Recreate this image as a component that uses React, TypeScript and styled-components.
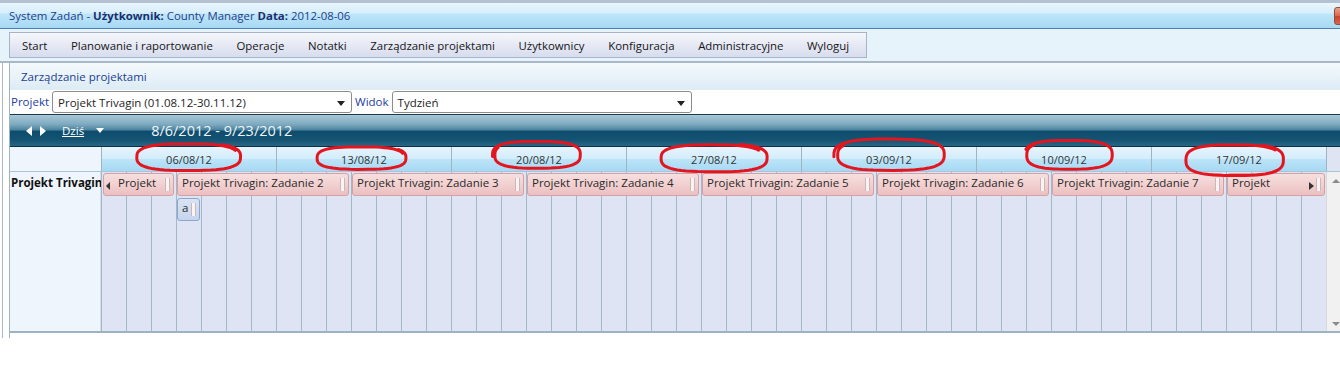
import React from 'react';
import styled, { createGlobalStyle } from 'styled-components';

const GlobalStyle = createGlobalStyle`
	html, body {
		margin: 0;
		padding: 0;
		background: #ffffff;
		overflow: hidden;
	}
	body {
		font-family: 'Open Sans', 'Noto Sans', 'Liberation Sans', sans-serif;
		font-size: 11px;
		color: #222;
	}
`;

const Page = styled.div`
	position: relative;
	width: 1340px;
	height: 392px;
	overflow: hidden;
	background: #fff;
`;

const TopStrip = styled.div`
	height: 3px;
	background: #b3c1d1;
`;

const TitleBar = styled.div`
	display: flex;
	align-items: center;
	height: 25px;
	padding-left: 9px;
	border-bottom: 1px solid #4b82b3;
	background: linear-gradient(to bottom, #eaf6fd 0%, #d6eefb 40%, #bde5f9 45%, #a7d9f4 100%);
	color: #1f3d8b;
	font-size: 11.4px;
	white-space: nowrap;
	b {
		color: #1a2f70;
		font-weight: 700;
	}
`;

const CloseButton = styled.div`
	margin-left: auto;
	margin-right: -18px;
	width: 22px;
	height: 16px;
	border: 1px solid #8e4d3c;
	border-radius: 3px;
	background: linear-gradient(to bottom, #eea08e 0%, #d9634c 50%, #c4432b 51%, #d8664b 100%);
`;

const MenuArea = styled.div`
	height: 32px;
	padding: 3px 0 0 9px;
	box-sizing: border-box;
	background: #e7f3fb;
`;

const Menu = styled.div`
	display: inline-flex;
	align-items: center;
	height: 24px;
	padding-right: 5px;
	border: 1px solid #a7b4c7;
	background: linear-gradient(to bottom, #f6f7fb 0%, #e6e9f4 50%, #d7ddee 100%);
`;

const MenuItem = styled.span`
	padding: 0 11.8px;
	color: #161616;
	font-size: 11.4px;
	white-space: nowrap;
	&:first-child {
		padding-left: 12px;
	}
`;

const Divider = styled.div`
	height: 2px;
	background: #a9b8c8;
`;

const Frame = styled.div`
	display: flex;
	height: 275px;
	margin-left: 2px;
	border-left: 1px solid #a9b8c8;
	padding-left: 6px;
`;

const Panel = styled.div`
	flex: 1;
	display: flex;
	flex-direction: column;
	border-left: 1px solid #9fb3c3;
	min-width: 0;
`;

const SectionHeader = styled.div`
	height: 27px;
	line-height: 27px;
	padding-left: 11px;
	background: linear-gradient(to bottom, #f4f9fc 0%, #eaf3f9 45%, #dcebf5 100%);
	color: #1c3e94;
	font-size: 11.5px;
`;

const FilterRow = styled.div`
	display: flex;
	align-items: center;
	height: 24px;
	background: #fff;
`;

const FilterLabel = styled.span<{ $gap: number }>`
	margin-left: ${(p) => p.$gap}px;
	margin-right: 3px;
	margin-bottom: 2px;
	color: #2140a3;
	font-size: 11.5px;
`;

const Select = styled.div`
	position: relative;
	display: flex;
	align-items: center;
	box-sizing: border-box;
	width: 300px;
	height: 22px;
	padding-left: 5px;
	border: 1px solid #8c8c8c;
	border-radius: 3px;
	background: #fff;
	color: #1e1e1e;
	font-size: 11.5px;
`;

const SelectCaret = styled.span`
	position: absolute;
	right: 6px;
	top: 9px;
	width: 0;
	height: 0;
	border-left: 4px solid transparent;
	border-right: 4px solid transparent;
	border-top: 5px solid #222;
`;

const Toolbar = styled.div`
	display: flex;
	align-items: center;
	height: 31px;
	padding-left: 16px;
	border-top: 1px solid #1f3a4a;
	border-bottom: 1px solid #0b3144;
	background: linear-gradient(
		to bottom,
		#a9c7d6 0%,
		#7eaac0 30%,
		#4f86a1 47%,
		#0f4d6d 53%,
		#145373 80%,
		#296686 100%
	);
	color: #fff;
`;

const Arrow = styled.span<{ $dir: 'left' | 'right' | 'down'; $color?: string }>`
	display: inline-block;
	width: 0;
	height: 0;
	${(p) =>
		p.$dir === 'left'
			? `border-top: 5px solid transparent; border-bottom: 5px solid transparent; border-right: 6px solid ${p.$color || '#fff'};`
			: p.$dir === 'right'
			? `border-top: 5px solid transparent; border-bottom: 5px solid transparent; border-left: 6px solid ${p.$color || '#fff'};`
			: `border-left: 4px solid transparent; border-right: 4px solid transparent; border-top: 5px solid ${p.$color || '#fff'};`}
`;

const NavArrows = styled.div`
	display: flex;
	gap: 8px;
	align-items: center;
`;

const TodayLink = styled.span`
	margin-left: 16px;
	margin-right: 12px;
	color: #fff;
	font-size: 11.5px;
	text-decoration: underline;
`;

const RangeText = styled.span`
	margin-left: 47px;
	color: #eef4f8;
	font-size: 14.5px;
`;

const Scheduler = styled.div`
	display: flex;
	flex-direction: column;
`;

const HeaderRow = styled.div`
	display: grid;
	grid-template-columns: 91px repeat(7, 175px) 1fr;
	height: 24px;
	border-bottom: 1px solid #a8c4d6;
`;

const Corner = styled.div`
	background: #eef5fc;
`;

const DateCell = styled.div`
	display: flex;
	align-items: center;
	justify-content: center;
	border-left: 1px solid #9fb3c2;
	background: linear-gradient(to bottom, #e6f4fd 0%, #d3edfb 48%, #bce4f8 52%, #a6d9f4 100%);
	color: #333;
	font-size: 11px;
`;

const HeaderCap = styled.div`
	border-left: 1px solid #a0b4c4;
	background: #dee4f2;
`;

const BodyRow = styled.div`
	display: grid;
	grid-template-columns: 91px 1225px 1fr;
	height: 159px;
	border-bottom: 2px solid #9db2c2;
`;

const RowLabel = styled.div`
	padding: 3px 0 0 1px;
	border-right: 1px solid #d3deea;
	background: #eef5fd;
	color: #111;
	font-size: 11.5px;
	font-weight: 700;
	white-space: nowrap;
`;

const Grid = styled.div`
	display: grid;
	grid-template-columns: 74px repeat(6, 175px) 101px;
	grid-auto-rows: 25px;
	align-content: start;
	background-color: #dfe4f4;
	background-image: repeating-linear-gradient(
		to right,
		transparent 0px,
		transparent 24px,
		#a3b8c6 24px,
		#a3b8c6 25px
	);
	background-position: 1px 0;
`;

const Slot = styled.div<{ $col: number; $row: number }>`
	grid-column: ${(p) => p.$col};
	grid-row: ${(p) => p.$row};
	padding: 1px 1px 1px 2px;
	min-width: 0;
`;

const EventBox = styled.div<{ $tone: 'red' | 'blue'; $padLeft: number; $padRight: number }>`
	position: relative;
	box-sizing: border-box;
	height: 23px;
	padding: 1px ${(p) => p.$padRight}px 0 ${(p) => p.$padLeft}px;
	border: 1px solid ${(p) => (p.$tone === 'red' ? '#d5a0a3' : '#8ea5c9')};
	border-radius: 3px;
	overflow: hidden;
	background: ${(p) =>
		p.$tone === 'red'
			? 'linear-gradient(to bottom, #f7dfdf 0%, #f2d0d0 50%, #ebc0c1 100%)'
			: 'linear-gradient(to bottom, #d8e3f5 0%, #c6d5ee 100%)'};
	color: #2a2a2a;
	font-size: 11.5px;
	line-height: 16px;
	&::after {
		content: '';
		position: absolute;
		right: 3px;
		top: 4px;
		bottom: 4px;
		width: 3px;
		border-left: 1px solid #c8b8b8;
		border-right: 1px solid #c8b8b8;
		background: #fbf3f3;
	}
`;

const EventArrow = styled.span<{ $side: 'left' | 'right' }>`
	position: absolute;
	top: 8px;
	${(p) => (p.$side === 'left' ? 'left: 2px;' : 'right: 10px;')}
	width: 0;
	height: 0;
	border-top: 4px solid transparent;
	border-bottom: 4px solid transparent;
	${(p) => (p.$side === 'left' ? 'border-right: 4px solid #333;' : 'border-left: 5px solid #333;')}
`;

const Scrollbar = styled.div`
	display: flex;
	flex-direction: column;
	justify-content: space-between;
	align-items: center;
	padding: 7px 0 5px 4px;
	border-left: 1px solid #d9d9d9;
	background: #f1f1f1;
`;

const ScrollArrow = styled.span<{ $up?: boolean }>`
	width: 0;
	height: 0;
	border-left: 4px solid transparent;
	border-right: 4px solid transparent;
	${(p) => (p.$up ? 'border-bottom: 4px solid #8a8a8a;' : 'border-top: 4px solid #8a8a8a;')}
`;

const Annotations = styled.svg`
	position: absolute;
	left: 0;
	top: 0;
	pointer-events: none;
`;

const menuItems = [
	'Start',
	'Planowanie i raportowanie',
	'Operacje',
	'Notatki',
	'Zarządzanie projektami',
	'Użytkownicy',
	'Konfiguracja',
	'Administracyjne',
	'Wyloguj',
];

const dates = ['06/08/12', '13/08/12', '20/08/12', '27/08/12', '03/09/12', '10/09/12', '17/09/12'];

interface IEvent {
	col: number;
	row: number;
	text: string;
	tone: 'red' | 'blue';
	arrow?: 'left' | 'right';
}

const events: IEvent[] = [
	{ col: 1, row: 1, text: 'Projekt Trivagin: Zadanie 1', tone: 'red', arrow: 'left' },
	{ col: 2, row: 1, text: 'Projekt Trivagin: Zadanie 2', tone: 'red' },
	{ col: 3, row: 1, text: 'Projekt Trivagin: Zadanie 3', tone: 'red' },
	{ col: 4, row: 1, text: 'Projekt Trivagin: Zadanie 4', tone: 'red' },
	{ col: 5, row: 1, text: 'Projekt Trivagin: Zadanie 5', tone: 'red' },
	{ col: 6, row: 1, text: 'Projekt Trivagin: Zadanie 6', tone: 'red' },
	{ col: 7, row: 1, text: 'Projekt Trivagin: Zadanie 7', tone: 'red' },
	{ col: 8, row: 1, text: 'Projekt Trivagin: Zadanie 8', tone: 'red', arrow: 'right' },
];

// hand drawn red loops around the week dates
interface ILoop {
	cx: number;
	cy: number;
	rx: number;
	ry: number;
	start: number;
	over: number;
	drift: number;
}

const loops: ILoop[] = [
	{ cx: 188, cy: 157, rx: 50, ry: 13, start: -0.4, over: 0.6, drift: 0.06 },
	{ cx: 361, cy: 158, rx: 43, ry: 11, start: -0.3, over: 0.4, drift: 0.05 },
	{ cx: 537, cy: 155, rx: 42, ry: 13, start: 3.6, over: 0.5, drift: 0.06 },
	{ cx: 713, cy: 158, rx: 50, ry: 13, start: -0.5, over: 0.7, drift: 0.1 },
	{ cx: 890, cy: 155, rx: 52, ry: 15, start: 3.7, over: 0.6, drift: 0.08 },
	{ cx: 1069, cy: 155, rx: 42, ry: 14, start: 3.8, over: 0.4, drift: 0.05 },
	{ cx: 1234, cy: 160, rx: 47, ry: 15, start: -0.6, over: 0.5, drift: 0.06 },
];

const loopPath = (l: ILoop) => {
	const steps = 64;
	const sweep = Math.PI * 2 + l.over;
	const parts: string[] = [];
	for (let i = 0; i <= steps; i++) {
		const t = l.start - (sweep * i) / steps;
		const k = 1 + l.drift * (i / steps);
		const c = Math.cos(t);
		const s = Math.sin(t);
		const x = l.cx + l.rx * k * Math.sign(c) * Math.pow(Math.abs(c), 0.7);
		const y = l.cy + l.ry * k * Math.sign(s) * Math.pow(Math.abs(s), 0.7);
		parts.push(`${i ? 'L' : 'M'}${x.toFixed(1)} ${y.toFixed(1)}`);
	}
	return parts.join(' ');
};

function App() {
	return (
		<>
			<GlobalStyle />
			<Page>
				<TopStrip />
				<TitleBar>
					System Zadań -&nbsp;<b>Użytkownik:</b>&nbsp;County Manager&nbsp;<b>Data:</b>&nbsp;2012-08-06
					<CloseButton />
				</TitleBar>
				<MenuArea>
					<Menu>
						{menuItems.map((item) => (
							<MenuItem key={item}>{item}</MenuItem>
						))}
					</Menu>
				</MenuArea>
				<Divider />
				<Frame>
					<Panel>
						<SectionHeader>Zarządzanie projektami</SectionHeader>
						<FilterRow>
							<FilterLabel $gap={1}>Projekt</FilterLabel>
							<Select>
								Projekt Trivagin (01.08.12-30.11.12)
								<SelectCaret />
							</Select>
							<FilterLabel $gap={3}>Widok</FilterLabel>
							<Select>
								Tydzień
								<SelectCaret />
							</Select>
						</FilterRow>
						<Toolbar>
							<NavArrows>
								<Arrow $dir="left" />
								<Arrow $dir="right" />
							</NavArrows>
							<TodayLink>Dziś</TodayLink>
							<Arrow $dir="down" />
							<RangeText>8/6/2012 - 9/23/2012</RangeText>
						</Toolbar>
						<Scheduler>
							<HeaderRow>
								<Corner />
								{dates.map((d) => (
									<DateCell key={d}>{d}</DateCell>
								))}
								<HeaderCap />
							</HeaderRow>
							<BodyRow>
								<RowLabel>Projekt Trivagin</RowLabel>
								<Grid>
									{events.map((ev) => (
										<Slot key={ev.text} $col={ev.col} $row={ev.row}>
											<EventBox
												$tone={ev.tone}
												$padLeft={ev.arrow === 'left' ? 14 : 4}
												$padRight={ev.arrow === 'right' ? 16 : 10}
											>
												{ev.arrow && <EventArrow $side={ev.arrow} />}
												{ev.text}
											</EventBox>
										</Slot>
									))}
									<Slot $col={2} $row={2}>
										<EventBox $tone="blue" $padLeft={4} $padRight={0} style={{ width: 23 }}>
											a
										</EventBox>
									</Slot>
								</Grid>
								<Scrollbar>
									<ScrollArrow $up />
									<ScrollArrow />
								</Scrollbar>
							</BodyRow>
						</Scheduler>
					</Panel>
				</Frame>
				<Annotations width={1340} height={392}>
					{loops.map((l, i) => (
						<path
							key={i}
							d={loopPath(l)}
							fill="none"
							stroke="#e3161f"
							strokeWidth={3}
							strokeLinecap="round"
							strokeLinejoin="round"
						/>
					))}
				</Annotations>
			</Page>
		</>
	);
}

export default App;
